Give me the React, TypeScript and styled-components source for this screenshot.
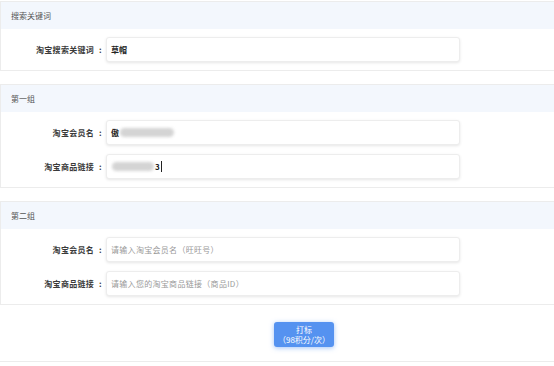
import styled, { createGlobalStyle } from "styled-components";

const GlobalStyle = createGlobalStyle`
  html, body {
    margin: 0;
    padding: 0;
    background: #fff;
  }
  body {
    font-family: "Noto Sans CJK SC", "Noto Sans", sans-serif;
    font-size: 8px;
    color: #333;
  }
`;

type Field = {
  label: string;
  value?: string;
  placeholder?: string;
  blur?: "name" | "link";
};

const groups: { title: string; fields: Field[] }[] = [
  {
    title: "搜索关键词",
    fields: [{ label: "淘宝搜索关键词", value: "草帽" }],
  },
  {
    title: "第一组",
    fields: [
      { label: "淘宝会员名", blur: "name" },
      { label: "淘宝商品链接", blur: "link" },
    ],
  },
  {
    title: "第二组",
    fields: [
      { label: "淘宝会员名", placeholder: "请输入淘宝会员名（旺旺号）" },
      { label: "淘宝商品链接", placeholder: "请输入您的淘宝商品链接（商品ID）" },
    ],
  },
];

const App = () => {
  return (
    <Page>
      <GlobalStyle />
      {groups.map((g) => (
        <Panel key={g.title}>
          <PanelHead>{g.title}</PanelHead>
          <PanelBody>
            {g.fields.map((f) => (
              <Row key={f.label}>
                <Label>
                  {f.label}
                  <Colon>:</Colon>
                </Label>
                <InputBox>
                  {f.value && <Value>{f.value}</Value>}
                  {f.placeholder && <Placeholder>{f.placeholder}</Placeholder>}
                  {f.blur === "name" && (
                    <Value>
                      傲<Smudge w={54} />
                    </Value>
                  )}
                  {f.blur === "link" && (
                    <Value>
                      <Smudge w={42} />3<Caret />
                    </Value>
                  )}
                </InputBox>
              </Row>
            ))}
          </PanelBody>
        </Panel>
      ))}
      <Footer>
        <SubmitButton>
          打标
          <br />
          （98积分/次）
        </SubmitButton>
      </Footer>
    </Page>
  );
};

export default App;

const Page = styled.div`
  width: 554px;
  padding-top: 1px;
`;

const Panel = styled.section`
  border: 1px solid #ececec;
  border-right: none;
  margin-bottom: 13px;
  background: #fff;
`;

const PanelHead = styled.div`
  height: 27px;
  line-height: 27px;
  padding-left: 10px;
  background: #f3f7fd;
  color: #555;
`;

const PanelBody = styled.div`
  padding: 8px 0;
  display: flex;
  flex-direction: column;
  gap: 9px;
`;

const Row = styled.div`
  display: grid;
  grid-template-columns: 101px 354px;
  column-gap: 4px;
  align-items: center;
`;

const Label = styled.label`
  text-align: right;
  font-weight: bold;
  color: #3a3a3a;
  letter-spacing: 0.3px;
`;

const Colon = styled.span`
  margin-left: 5px;
`;

const InputBox = styled.div`
  height: 25px;
  box-sizing: border-box;
  border: 1px solid #ededed;
  border-radius: 3px;
  background: #fff;
  box-shadow: 0 1px 3px rgba(0, 0, 0, 0.1);
  display: flex;
  align-items: center;
  padding-left: 4px;
`;

const Value = styled.span`
  display: flex;
  align-items: center;
  color: #222;
  font-weight: bold;
`;

const Placeholder = styled.span`
  color: #999;
  letter-spacing: 0.3px;
`;

const Smudge = styled.span<{ w: number }>`
  display: inline-block;
  width: ${(p) => p.w}px;
  height: 9px;
  background: #d4d4d4;
  border-radius: 5px;
  filter: blur(1.5px);
  margin: 0 1px;
`;

const Caret = styled.span`
  display: inline-block;
  width: 1px;
  height: 11px;
  background: #222;
  margin-left: 1px;
`;

const Footer = styled.div`
  margin-top: -12px;
  padding: 16px 0 14px 274px;
  border-bottom: 1px solid #ececec;
`;

const SubmitButton = styled.button`
  width: 60px;
  height: 25px;
  border: none;
  border-radius: 3px;
  background: #5592f0;
  color: #fff;
  font-family: inherit;
  font-size: 8px;
  line-height: 10px;
  padding: 0;
  box-shadow: 0 1px 5px rgba(85, 146, 240, 0.55);
  cursor: pointer;
`;
